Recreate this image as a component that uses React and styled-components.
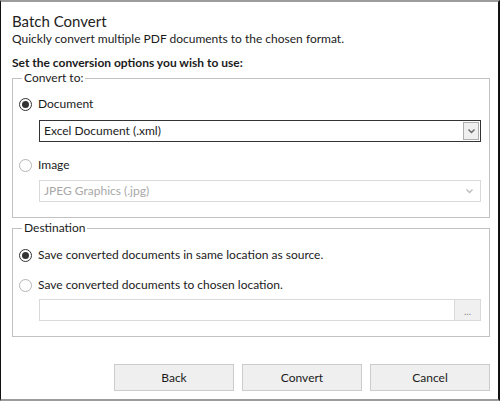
import React from 'react'
import styled, { createGlobalStyle } from 'styled-components'

const GlobalStyle = createGlobalStyle`
  html, body {
    margin: 0;
    padding: 0;
    background: #ffffff;
  }
  * {
    box-sizing: border-box;
  }
`

const Window = styled.div`
  width: 500px;
  height: 401px;
  background: #ffffff;
  border-left: 1px solid #111111;
  border-right: 2px solid #111111;
  border-top: 2px solid #9c9c9c;
  border-bottom: 2px solid #9c9c9c;
  padding: 10px 8px 0 11px;
  font-family: Lato, "Noto Sans", sans-serif;
  font-size: 12px;
  color: #1b1b1b;
  display: flex;
  flex-direction: column;
`

const Title = styled.div`
  font-size: 15px;
  line-height: 18px;
  color: #222222;
`

const Subtitle = styled.div`
  margin-top: 1px;
  line-height: 16px;
`

const Heading = styled.div`
  margin-top: 8px;
  line-height: 15px;
  font-weight: 700;
`

const Group = styled.fieldset`
  margin: ${p => p.$top}px 0 0 0;
  padding: 0 8px 15px 6px;
  border: 1px solid #c2c2c2;
  min-width: 0;
`

const Legend = styled.legend`
  margin-left: 3px;
  padding: 0 2px;
  line-height: 14px;
  font-size: 12px;
`

const RadioRow = styled.label`
  display: flex;
  align-items: center;
  gap: 6px;
  height: 16px;
  margin-top: ${p => p.$top}px;
  line-height: 16px;
`

const RadioCircle = styled.span`
  width: 13px;
  height: 13px;
  border-radius: 50%;
  border: 1px solid ${p => (p.$checked ? '#333333' : '#b5b5b5')};
  background: #ffffff;
  display: flex;
  align-items: center;
  justify-content: center;
  flex: none;

  &::after {
    content: '';
    width: 7px;
    height: 7px;
    border-radius: 50%;
    background: ${p => (p.$checked ? '#333333' : 'transparent')};
  }
`

const Select = styled.div`
  margin: ${p => p.$top}px 0 0 20px;
  height: 22px;
  border: 1px solid ${p => (p.$disabled ? '#d9d9d9' : '#333333')};
  display: flex;
  align-items: center;
  padding: 0 1px 0 4px;
  color: ${p => (p.$disabled ? '#a8a8a8' : '#1b1b1b')};
  background: #ffffff;
`

const SelectText = styled.span`
  flex: 1;
  line-height: 16px;
`

const ArrowBox = styled.span`
  width: 16px;
  height: 18px;
  display: flex;
  align-items: center;
  justify-content: center;
  border: 1px solid ${p => (p.$disabled ? 'transparent' : '#adadad')};
  background: ${p => (p.$disabled ? 'transparent' : '#efefef')};
  margin-right: ${p => (p.$disabled ? '2px' : '0')};
`

const PathRow = styled.div`
  margin: 6px 0 0 20px;
  height: 22px;
  display: flex;
`

const PathInput = styled.div`
  flex: 1;
  border: 1px solid #d9d9d9;
  background: #ffffff;
`

const BrowseButton = styled.div`
  width: 26px;
  border: 1px solid #d9d9d9;
  border-left: none;
  background: #f0f0f0;
  color: #888888;
  font-size: 10px;
  display: flex;
  align-items: flex-end;
  justify-content: center;
  padding-bottom: 4px;
  line-height: 10px;
`

const Footer = styled.div`
  margin-top: 27px;
  display: flex;
  justify-content: flex-end;
  gap: 8px;
`

const Button = styled.button`
  width: 120px;
  height: 27px;
  border: 1px solid #cccccc;
  background: #efefef;
  font-family: Lato, "Noto Sans", sans-serif;
  font-size: 12px;
  color: #1b1b1b;
  padding: 0;
`

const Chevron = ({ color }) => (
  <svg width="9" height="6" viewBox="0 0 9 6">
    <path d="M1.5 1.5 L4.5 4.5 L7.5 1.5" fill="none" stroke={color} strokeWidth="1.4" />
  </svg>
)

export default function App() {
  return (
    <>
      <GlobalStyle />
      <Window>
        <Title>Batch Convert</Title>
        <Subtitle>Quickly convert multiple PDF documents to the chosen format.</Subtitle>
        <Heading>Set the conversion options you wish to use:</Heading>

        <Group $top={1}>
          <Legend>Convert to:</Legend>
          <RadioRow $top={11}>
            <RadioCircle $checked />
            Document
          </RadioRow>
          <Select $top={8}>
            <SelectText>Excel Document (.xml)</SelectText>
            <ArrowBox>
              <Chevron color="#666666" />
            </ArrowBox>
          </Select>
          <RadioRow $top={15}>
            <RadioCircle />
            Image
          </RadioRow>
          <Select $top={7} $disabled>
            <SelectText>JPEG Graphics (.jpg)</SelectText>
            <ArrowBox $disabled>
              <Chevron color="#bdbdbd" />
            </ArrowBox>
          </Select>
        </Group>

        <Group $top={3}>
          <Legend>Destination</Legend>
          <RadioRow $top={12}>
            <RadioCircle $checked />
            Save converted documents in same location as source.
          </RadioRow>
          <RadioRow $top={14}>
            <RadioCircle />
            Save converted documents to chosen location.
          </RadioRow>
          <PathRow>
            <PathInput />
            <BrowseButton>...</BrowseButton>
          </PathRow>
        </Group>

        <Footer>
          <Button>Back</Button>
          <Button>Convert</Button>
          <Button>Cancel</Button>
        </Footer>
      </Window>
    </>
  )
}
